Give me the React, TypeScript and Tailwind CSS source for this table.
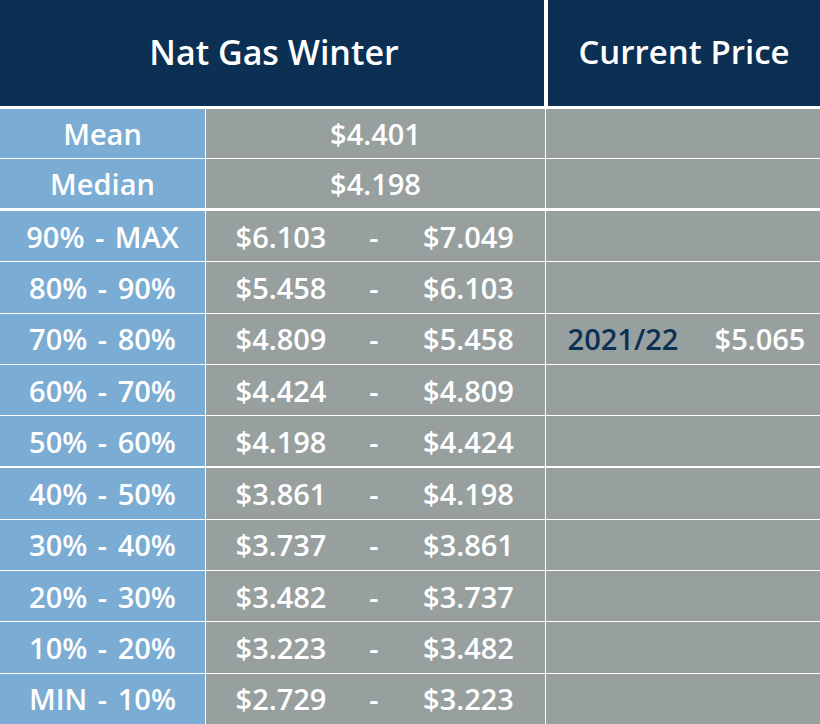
const rows: [string, string, string][] = [
  ['90% - MAX', '$6.103', '$7.049'],
  ['80% - 90%', '$5.458', '$6.103'],
  ['70% - 80%', '$4.809', '$5.458'],
  ['60% - 70%', '$4.424', '$4.809'],
  ['50% - 60%', '$4.198', '$4.424'],
  ['40% - 50%', '$3.861', '$4.198'],
  ['30% - 40%', '$3.737', '$3.861'],
  ['20% - 30%', '$3.482', '$3.737'],
  ['10% - 20%', '$3.223', '$3.482'],
  ['MIN - 10%', '$2.729', '$3.223'],
];

function StatRow({ label, value }: { label: string; value: string }) {
  return (
    <div className="grid grid-cols-[205px_339px_1fr] gap-x-px h-[49px]">
      <div className="bg-[#7aacd4] flex items-center justify-center">{label}</div>
      <div className="bg-[#98a09f] flex items-center justify-center">{value}</div>
      <div className="bg-[#98a09f]" />
    </div>
  );
}

export default function App() {
  return (
    <div
      className="w-[820px] h-[724px] bg-white flex flex-col text-white text-[29px] font-semibold leading-none overflow-hidden [word-spacing:3px]"
      style={{ fontFamily: '"Open Sans", Lato, sans-serif' }}
    >
      {/* Header */}
      <div className="flex gap-[4px] h-[106px] shrink-0 [word-spacing:0px]">
        <div className="w-[544px] bg-[#0b3054] flex items-center justify-center text-[34px] font-semibold pl-[4px] pb-[3px]">
          Nat Gas Winter
        </div>
        <div className="flex-1 bg-[#0b3054] flex items-center justify-center text-[33px] font-semibold pb-[3px]">
          Current Price
        </div>
      </div>

      {/* Mean / Median */}
      <div className="flex flex-col gap-y-px mt-[3px]">
        <StatRow label="Mean" value="$4.401" />
        <StatRow label="Median" value="$4.198" />
      </div>

      {/* Percentile ranges */}
      <div className="flex flex-col gap-y-px mt-[3px] flex-1">
        {rows.map(([label, lo, hi], i) => (
          <div
            key={label}
            className={`grid grid-cols-[205px_339px_1fr] gap-x-px flex-1 ${i === 5 ? 'mt-px' : ''}`}
          >
            <div className="bg-[#7aacd4] flex items-center justify-center">{label}</div>
            <div className="bg-[#98a09f] grid grid-cols-[150px_36px_153px] items-center text-center">
              <span>{lo}</span>
              <span>-</span>
              <span>{hi}</span>
            </div>
            <div className="bg-[#98a09f] grid grid-cols-[154px_120px] items-center text-center">
              {i === 2 && (
                <>
                  <span className="text-[#0b3054]">2021/22</span>
                  <span>$5.065</span>
                </>
              )}
            </div>
          </div>
        ))}
      </div>
    </div>
  );
}
